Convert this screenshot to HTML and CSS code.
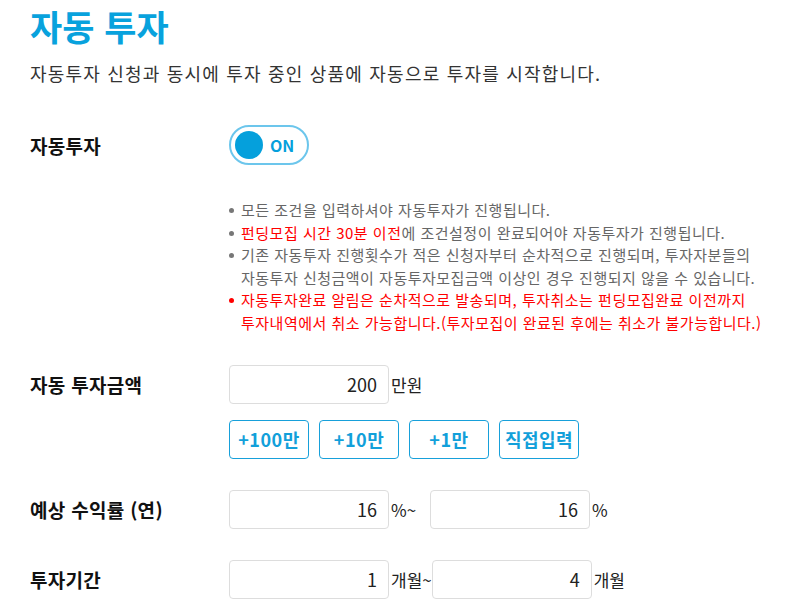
FILE: index.html
```html
<!DOCTYPE html>
<html lang="ko">
<head>
<meta charset="utf-8">
<title>자동 투자</title>
<link rel="stylesheet" href="styles.css">
</head>
<body>
<main class="page">
  <h1 class="title">자동 투자</h1>
  <p class="desc">자동투자 신청과 동시에 투자 중인 상품에 자동으로 투자를 시작합니다.</p>

  <div class="row row-toggle">
    <div class="label">자동투자</div>
    <div class="field">
      <button class="toggle" type="button"><span class="knob"></span><span class="toggle-text">ON</span></button>
    </div>
  </div>

  <ul class="notes">
    <li>모든 조건을 입력하셔야 자동투자가 진행됩니다.</li>
    <li><span class="red">펀딩모집 시간 30분 이전</span>에 조건설정이 완료되어야 자동투자가 진행됩니다.</li>
    <li>기존 자동투자 진행횟수가 적은 신청자부터 순차적으로 진행되며, 투자자분들의<br>자동투자 신청금액이 자동투자모집금액 이상인 경우 진행되지 않을 수 있습니다.</li>
    <li class="alert">자동투자완료 알림은 순차적으로 발송되며, 투자취소는 펀딩모집완료 이전까지<br>투자내역에서 취소 가능합니다.(투자모집이 완료된 후에는 취소가 불가능합니다.)</li>
  </ul>

  <div class="row row-amount">
    <div class="label">자동 투자금액</div>
    <div class="field">
      <input class="num" type="text" value="200" readonly><span class="unit">만원</span>
    </div>
  </div>
  <div class="btns">
    <button class="btn" type="button">+100만</button>
    <button class="btn" type="button">+10만</button>
    <button class="btn" type="button">+1만</button>
    <button class="btn" type="button">직접입력</button>
  </div>

  <div class="row row-rate">
    <div class="label">예상 수익률 (연)</div>
    <div class="field">
      <input class="num" type="text" value="16" readonly><span class="unit">%~</span>
      <input class="num" type="text" value="16" readonly><span class="unit">%</span>
    </div>
  </div>

  <div class="row row-period">
    <div class="label">투자기간</div>
    <div class="field">
      <input class="num" type="text" value="1" readonly><span class="unit">개월~</span>
      <input class="num" type="text" value="4" readonly><span class="unit">개월</span>
    </div>
  </div>
</main>
</body>
</html>
```

FILE: styles.css
```css
* { box-sizing: border-box; }

html, body {
  margin: 0;
  padding: 0;
  background: #fff;
}

body {
  font-family: "Noto Sans CJK KR", "Noto Sans", sans-serif;
  color: #222;
}

.page {
  padding: 6px 0 0 30px;
}

.title {
  margin: 0;
  font-size: 35px;
  line-height: 40px;
  font-weight: 700;
  color: #08a2dd;
  letter-spacing: 0;
}

.desc {
  margin: 15px 0 0;
  font-size: 18px;
  line-height: 24px;
  letter-spacing: 1.2px;
  color: #333;
}

.row {
  display: flex;
  align-items: center;
}

.label {
  width: 199px;
  flex: none;
  font-size: 19px;
  font-weight: 700;
  letter-spacing: 0.3px;
  color: #111;
}

.field {
  display: flex;
  align-items: center;
}

.row-toggle { margin-top: 40px; }

.toggle {
  width: 80px;
  height: 40px;
  border: 2px solid #6cc6ec;
  border-radius: 20px;
  background: #fff;
  padding: 0 0 0 4px;
  display: flex;
  align-items: center;
  gap: 7px;
  font-family: inherit;
  cursor: pointer;
}

.knob {
  width: 28px;
  height: 28px;
  border-radius: 50%;
  background: #05a0dc;
  flex: none;
}

.toggle-text {
  font-size: 16px;
  font-weight: 700;
  color: #05a0dc;
  line-height: 1;
}

.notes {
  list-style: none;
  margin: 34px 0 0 199px;
  padding: 0;
  font-size: 15px;
  line-height: 22.6px;
  letter-spacing: 0.5px;
  color: #666;
}

.notes li {
  position: relative;
  padding-left: 12px;
}

.notes li::before {
  content: "";
  position: absolute;
  left: 0;
  top: 9px;
  width: 5px;
  height: 5px;
  border-radius: 50%;
  background: #777;
}

.notes .red,
.notes .alert { color: #f00; }

.notes li.alert::before { background: #f00; }

.row-amount { margin-top: 30px; }

.num {
  width: 160px;
  height: 39px;
  border: 1px solid #ddd;
  border-radius: 4px;
  padding: 0 11px 0 8px;
  text-align: right;
  font-family: inherit;
  font-size: 18px;
  color: #222;
  background: #fff;
  outline: none;
}

.unit {
  min-width: 41px;
  padding-left: 2px;
  font-size: 17px;
  color: #222;
}

.btns {
  display: flex;
  gap: 10px;
  margin: 16px 0 0 199px;
}

.btn {
  width: 80px;
  height: 39px;
  border: 1px solid #17a0da;
  border-radius: 4px;
  background: #fff;
  color: #12a0da;
  font-family: inherit;
  font-size: 18px;
  font-weight: 700;
  letter-spacing: 0.5px;
  padding: 0;
  cursor: pointer;
}

.row-rate { margin-top: 31px; }
.row-period { margin-top: 31px; }
```
